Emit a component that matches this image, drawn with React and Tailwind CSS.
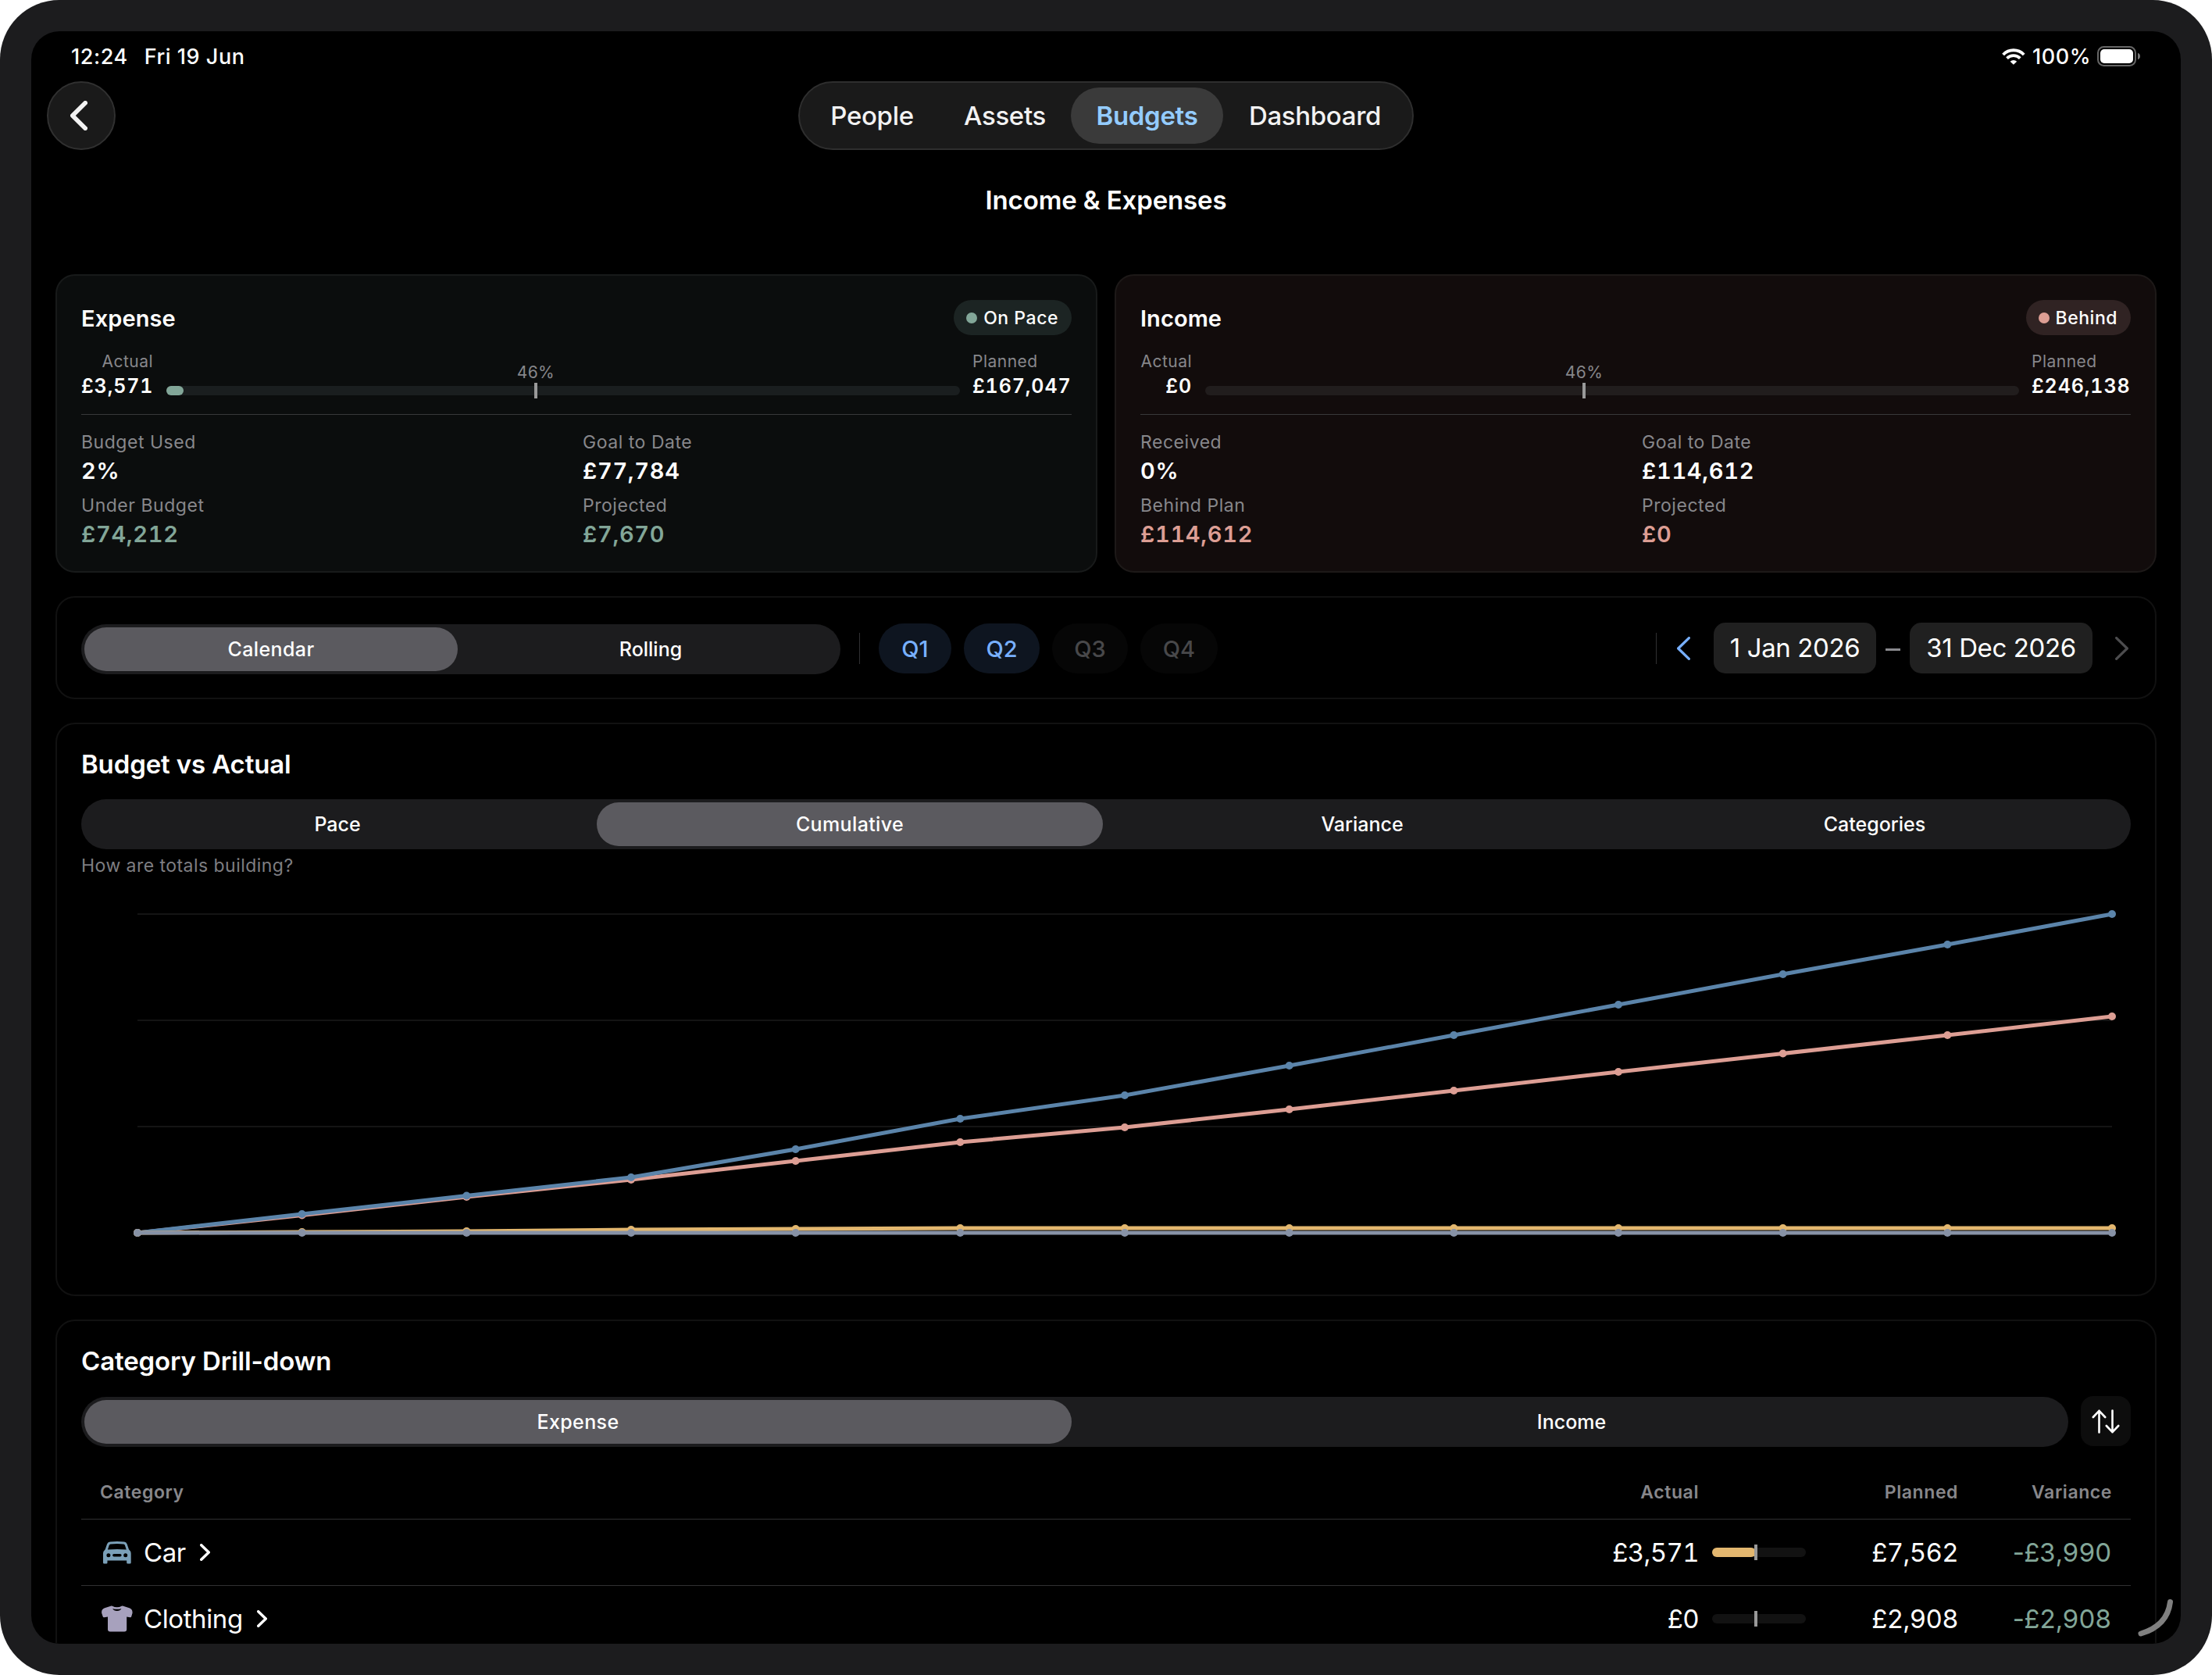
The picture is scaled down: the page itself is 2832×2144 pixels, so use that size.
import clsx from 'clsx'

const TABS = ['People', 'Assets', 'Budgets', 'Dashboard']

const SUMMARIES = [
  {
    title: 'Expense',
    status: 'On Pace',
    actual: '£3,571',
    planned: '£167,047',
    progress: 2.2,
    stats: [
      { label: 'Budget Used', value: '2%' },
      { label: 'Goal to Date', value: '£77,784' },
      { label: 'Under Budget', value: '£74,212', accent: true },
      { label: 'Projected', value: '£7,670', accent: true },
    ],
    actualWidth: 'w-[92px]',
    card: 'bg-[#0b0d0d] outline-[#181a1a]',
    badge: 'bg-[#1c2423]',
    dot: 'bg-[#82a698]',
    track: 'bg-[#1a1e1f]',
    accent: 'text-[#82a698]',
  },
  {
    title: 'Income',
    status: 'Behind',
    actual: '£0',
    planned: '£246,138',
    progress: 0,
    stats: [
      { label: 'Received', value: '0%' },
      { label: 'Goal to Date', value: '£114,612' },
      { label: 'Behind Plan', value: '£114,612', accent: true },
      { label: 'Projected', value: '£0', accent: true },
    ],
    actualWidth: 'w-[66px]',
    card: 'bg-[#120c0c] outline-[#1d1918]',
    badge: 'bg-[#302323]',
    dot: 'bg-[#dd9e94]',
    track: 'bg-[#211d1d]',
    accent: 'text-[#dd9e94]',
  },
]

const QUARTERS = [
  { label: 'Q1', active: true, width: 'w-[93px]' },
  { label: 'Q2', active: true, width: 'w-[97px]' },
  { label: 'Q3', active: false, width: 'w-[97px]' },
  { label: 'Q4', active: false, width: 'w-[99px]' },
]

// Monthly running totals, already in chart pixels (0 = top of the plot).
const SERIES = [
  { color: '#dd9e94', ys: [438, 415.5, 392, 370, 346, 322, 303, 280, 256, 232, 208.5, 185, 161] },
  { color: '#5b84aa', ys: [438, 414, 390.5, 367, 331, 292, 262, 224, 185, 146, 107, 69, 30] },
  { color: '#e3b76f', ys: [438, 437, 436, 434, 433, 432, 432, 432, 432, 432, 432, 432, 432] },
  { color: '#8792a6', ys: [438, 438, 438, 438, 438, 438, 438, 438, 438, 438, 438, 438, 438] },
]

const CATEGORIES = [
  { name: 'Car', icon: CarIcon, actual: '£3,571', planned: '£7,562', variance: '£3,990', progress: 47 },
  { name: 'Clothing', icon: ShirtIcon, actual: '£0', planned: '£2,908', variance: '£2,908', progress: 0 },
]

function WifiIcon() {
  return (
    <svg width="30" height="21" viewBox="0 0 30 21" fill="none" stroke="#fff">
      <path d="M1.6 8A18.4 18.4 0 0 1 28.2 8" strokeWidth="3.9" />
      <path d="M6.5 12.6A11.8 11.8 0 0 1 23.3 12.6" strokeWidth="3.7" />
      <path d="M10.6 16.7A6 6 0 0 1 19.2 16.7L14.9 20.8Z" fill="#fff" stroke="none" />
    </svg>
  )
}

function BatteryIcon() {
  return (
    <svg width="56" height="26" viewBox="0 0 56 26">
      <rect x="1" y="1" width="48" height="24" rx="7.5" fill="none" stroke="#666" strokeWidth="2" />
      <rect x="4" y="4" width="42" height="18" rx="5" fill="#fff" />
      <path d="M52 8.8C54 9.4 55 11 55 13S54 16.6 52 17.2Z" fill="#777" />
    </svg>
  )
}

function Chevron({ dir = 'right', width, height, stroke, className }) {
  const half = stroke / 2
  const d =
    dir === 'left'
      ? `M${width - half} ${half}L${half} ${height / 2}L${width - half} ${height - half}`
      : `M${half} ${half}L${width - half} ${height / 2}L${half} ${height - half}`
  return (
    <svg
      width={width}
      height={height}
      fill="none"
      stroke="currentColor"
      strokeWidth={stroke}
      strokeLinecap="round"
      strokeLinejoin="round"
      className={className}
    >
      <path d={d} />
    </svg>
  )
}

function CarIcon() {
  return (
    <svg width="36" height="29" viewBox="0 0 36 29" fill="#7ba0b8" fillRule="evenodd">
      <path d="M9 .5Q18-.5 27 .5Q29.6.8 30.6 3.2L33 10.2Q35.7 12.4 35.7 15.6V27.2Q35.7 28.6 34.3 28.6H31.6Q30.2 28.6 30.2 27.2V24.6H5.5V27.2Q5.5 28.6 4.1 28.6H1.4Q0 28.6 0 27.2V15.6Q0 12.4 2.7 10.2L5.1 3.2Q6.1.8 9 .5ZM9.4 3.4Q8.2 3.6 7.8 4.7L5.9 10.5Q18 9.6 29.8 10.5L27.9 4.7Q27.5 3.6 26.3 3.4Q18 2.7 9.4 3.4ZM6.9 15.2A2.5 2.5 0 1 0 6.9 20.2A2.5 2.5 0 1 0 6.9 15.2ZM28.7 15.2A2.5 2.5 0 1 0 28.7 20.2A2.5 2.5 0 1 0 28.7 15.2ZM13.9 16A1.8 1.8 0 0 0 13.9 19.6H21.8A1.8 1.8 0 0 0 21.8 16Z" />
    </svg>
  )
}

function ShirtIcon() {
  return (
    <svg width="40" height="34" viewBox="0 0 40 34" fill="#a7a1bd" fillRule="evenodd">
      <path d="M12.6.4Q13.3.3 13.9.7Q16.5 2.2 19.8 2.2T25.7.7Q26.3.3 27 .4L35.6 3.3Q39 4.6 39.4 7.4L39.6 9.6L38.2 14.2Q37.9 15.4 36.6 15.2L32.2 14.4V30.4Q32.2 33.4 29.2 33.4H11Q8 33.4 8 30.4V14.4L3.4 15.2Q2 15.4 1.7 14.2L.1 9.6L.2 7.4Q.6 4.6 4 3.3ZM14.2 3.9Q15.6 6.9 19.8 6.9T25.4 3.9Q22.8 4.8 19.8 4.8T14.2 3.9Z" />
    </svg>
  )
}

function SortIcon() {
  return (
    <svg width="36" height="31" viewBox="0 0 36 31" fill="none" stroke="#fff" strokeWidth="2.6" strokeLinecap="round" strokeLinejoin="round">
      <path d="M9.5 29.5V1.8M1.8 10L9.5 1.8L17.2 10" />
      <path d="M26.5 1.5V29.2M18.8 21L26.5 29.2L34.2 21" />
    </svg>
  )
}

function StatusBar() {
  return (
    <div className="h-16 pl-[51px] pr-[51px] flex items-center justify-between text-[27px] font-medium tracking-[0.02em]">
      <div className="pt-0.5 flex gap-[21px]">
        <span>12:24</span>
        <span>Fri 19 Jun</span>
      </div>
      <div className="flex items-center">
        <WifiIcon />
        <span className="pt-0.5 ml-[9px] mr-2">100%</span>
        <BatteryIcon />
      </div>
    </div>
  )
}

function NavBar() {
  return (
    <div className="grid grid-cols-[1fr_auto_1fr] h-[88px] px-5">
      <button className="size-[88px] rounded-full bg-[#1a1a1a] border-2 border-[#303030] flex items-center justify-center text-[#f2f2f2]">
        <Chevron dir="left" width={22} height={38} stroke={5.6} className="mr-[6px]" />
      </button>
      <div className="w-[788px] rounded-full bg-[#1a1a1a] border-2 border-[#2e2e2e] px-[7px] flex items-center">
        {TABS.map((tab) => (
          <button
            key={tab}
            className={clsx(
              'h-[72px] pt-0.5 rounded-full text-[33px] text-center tracking-[-0.01em]',
              tab === 'People' && 'w-[171px]',
              tab === 'Assets' && 'w-[169px]',
              tab === 'Dashboard' && 'w-[235px]',
              tab === 'Budgets'
                ? 'w-[195px] bg-[#3a3a3a] text-[#94ccff] font-semibold'
                : 'text-[#f2f2f2] font-medium',
            )}
          >
            {tab}
          </button>
        ))}
      </div>
    </div>
  )
}

function SummaryCard({ data }) {
  return (
    <div className={clsx('h-[380px] rounded-3xl outline-2 -outline-offset-1 p-8', data.card)}>
      <div className="flex justify-between">
        <h2 className="text-[29px] leading-[48px] font-semibold tracking-[0.003em]">{data.title}</h2>
        <div className={clsx('h-[45px] rounded-full pl-4 pr-[17px] flex items-center', data.badge)}>
          <span className={clsx('size-[14px] rounded-full', data.dot)} />
          <span className="pt-px ml-2 text-[23px] font-medium tracking-[0.023em]">{data.status}</span>
        </div>
      </div>

      <div className="mt-[14px] h-16 flex">
        <div className={clsx('shrink-0 mr-[17px] text-right', data.actualWidth)}>
          <p className="text-[21px] leading-[34px] text-[#87878b] tracking-[0.023em]">Actual</p>
          <p className="text-[25px] leading-7 font-semibold tabular-nums whitespace-nowrap tracking-[0.035em]">{data.actual}</p>
        </div>
        <div className={clsx('relative flex-1 h-3 mt-12 rounded-full', data.track)}>
          {data.progress > 0 && (
            <div className={clsx('h-3 rounded-full', data.dot)} style={{ width: `${data.progress}%` }} />
          )}
          <div className="absolute left-[46.55%] -top-1 w-1 h-5 -ml-0.5 bg-[#999]" />
          <span className="absolute left-[46.55%] -top-[33px] -translate-x-1/2 text-[21px] leading-8 text-[#87878b] tracking-[0.02em]">
            46%
          </span>
        </div>
        <div className="shrink-0 w-32 pl-px ml-[15px]">
          <p className="text-[21px] leading-[34px] text-[#87878b] tracking-[0.023em]">Planned</p>
          <p className="text-[25px] leading-7 font-semibold tabular-nums whitespace-nowrap tracking-[0.035em]">{data.planned}</p>
        </div>
      </div>

      <div className="mt-5 h-px bg-[#38393a]" />

      <div className="mt-[17px] grid grid-cols-2 gap-x-4 gap-y-[9px]">
        {data.stats.map((stat) => (
          <div key={stat.label}>
            <p className="text-[23px] leading-[37px] text-[#87878b] tracking-[0.023em]">{stat.label}</p>
            <p
              className={clsx(
                'text-[29px] leading-[35px] font-semibold tabular-nums tracking-[0.024em]',
                stat.accent && data.accent,
              )}
            >
              {stat.value}
            </p>
          </div>
        ))}
      </div>
    </div>
  )
}

function Segmented({ options, selected, className }) {
  return (
    <div className={clsx('h-16 rounded-full bg-[#1c1c1e] flex', className)}>
      {options.map((option) => (
        <div key={option} className="flex-1 p-1">
          <div
            className={clsx(
              'h-14 pt-0.5 rounded-full flex items-center justify-center text-[25px] font-medium',
              option === selected && 'bg-[#5b5a5f] tracking-[0.015em]',
            )}
          >
            {option}
          </div>
        </div>
      ))}
    </div>
  )
}

function FilterBar() {
  return (
    <div className="mt-8 h-[130px] rounded-3xl outline-2 -outline-offset-1 outline-[#111] px-8 pt-[34px] flex">
      <Segmented options={['Calendar', 'Rolling']} selected="Calendar" className="w-[972px] mt-px" />
      <div className="mt-3 ml-6 w-px h-10 bg-[#303032]" />
      <div className="ml-6 flex gap-4">
        {QUARTERS.map((q) => (
          <div
            key={q.label}
            className={clsx(
              'h-16 pt-px rounded-full flex items-center justify-center text-[29px] font-medium',
              q.width,
              q.active ? 'bg-[#0e1520] text-[#78b0ff]' : 'bg-[#060606] text-[#48484a]',
            )}
          >
            {q.label}
          </div>
        ))}
      </div>
      <div className="ml-auto mt-3 w-px h-10 bg-[#303032]" />
      <Chevron dir="left" width={17} height={30} stroke={3.2} className="mt-[17px] ml-[26px] text-[#78b0ff]" />
      <div className="-mt-px ml-[30px] w-[208px] h-[65px] rounded-[15px] bg-[#202020] flex items-center justify-center text-[33px] tracking-[-0.012em]">
        1 Jan 2026
      </div>
      <div className="mt-8 mx-3 w-[19px] h-[3px] bg-[#8a8a8e]" />
      <div className="-mt-px w-[234px] h-[65px] rounded-[15px] bg-[#202020] flex items-center justify-center text-[33px] tracking-[-0.012em]">
        31 Dec 2026
      </div>
      <Chevron width={17} height={30} stroke={3.2} className="mt-[17px] ml-[29px] mr-[3px] text-[#4c4c4e]" />
    </div>
  )
}

function BudgetChart() {
  const x = (i) => 72 + (i * 2528) / 12
  return (
    <svg width="2624" height="480" viewBox="0 0 2624 480" className="mt-[17px]">
      {[30, 166, 302, 438].map((y) => (
        <line key={y} x1="72" x2="2600" y1={y} y2={y} stroke="#141414" strokeWidth="2" />
      ))}
      {SERIES.map((s) => (
        <g key={s.color}>
          <polyline
            points={s.ys.map((y, i) => `${x(i)},${y}`).join(' ')}
            fill="none"
            stroke={s.color}
            strokeWidth="5"
            strokeLinejoin="round"
          />
          {s.ys.map((y, i) => (
            <circle key={i} cx={x(i)} cy={y} r="5" fill={s.color} />
          ))}
        </g>
      ))}
    </svg>
  )
}

function CategoryRow({ row }) {
  const Icon = row.icon
  return (
    <div className="h-[85px] border-t border-[#303032] pl-[26px] pr-6 flex items-center text-[33px]">
      <div className="w-10 flex justify-center">
        <Icon />
      </div>
      <span className="pt-px ml-[14px] tracking-[-0.012em]">{row.name}</span>
      <Chevron width={13} height={22} stroke={3.4} className="ml-[18px]" />
      <span className="pt-px ml-auto tabular-nums tracking-[-0.02em]">{row.actual}</span>
      <div className="relative ml-[17px] w-[120px] h-3 rounded-full bg-[#121212]">
        {row.progress > 0 && (
          <div className="h-3 rounded-full bg-[#e3b76f]" style={{ width: `${row.progress}%` }} />
        )}
        <div className="absolute left-[54px] -top-1 w-1 h-5 bg-[#999]" />
      </div>
      <span className="pt-px w-[195px] text-right tabular-nums tracking-[-0.02em]">{row.planned}</span>
      <span className="pt-px w-[196px] mr-px text-right tracking-[-0.015em] text-[#82a698]">
        -<span className="tabular-nums">{row.variance}</span>
      </span>
    </div>
  )
}

export default function App() {
  return (
    <div className="w-[2832px] h-[2144px] bg-white font-['Inter',sans-serif] text-white">
      <div className="h-full rounded-[76px] bg-[#1c1c1e] p-10">
        <div className="relative h-full rounded-[36px] bg-black overflow-hidden">
          <StatusBar />
          <NavBar />
          <h1 className="h-32 pt-0.5 flex items-center justify-center text-[33px] font-semibold tracking-[-0.004em]">
            Income &amp; Expenses
          </h1>

          <main className="px-8 pt-8">
            <div className="grid grid-cols-2 gap-6">
              {SUMMARIES.map((data) => (
                <SummaryCard key={data.title} data={data} />
              ))}
            </div>

            <FilterBar />

            <section className="mt-8 h-[732px] rounded-3xl outline-2 -outline-offset-1 outline-[#111] p-8">
              <h2 className="text-[33px] leading-10 font-semibold tracking-[-0.004em]">Budget vs Actual</h2>
              <Segmented
                options={['Pace', 'Cumulative', 'Variance', 'Categories']}
                selected="Cumulative"
                className="mt-[25px]"
              />
              <p className="mt-[6px] text-[23px] leading-[30px] text-[#7e7e82] tracking-[0.02em]">How are totals building?</p>
              <BudgetChart />
            </section>

            <section className="mt-8 h-[500px] rounded-3xl outline-2 -outline-offset-1 outline-[#111] p-8">
              <h2 className="text-[33px] leading-10 font-semibold tracking-[-0.004em]">Category Drill-down</h2>
              <div className="mt-[25px] flex">
                <Segmented options={['Expense', 'Income']} selected="Expense" className="mt-px flex-1" />
                <button className="ml-4 size-16 rounded-2xl bg-[#0d0d0d] flex items-center justify-center">
                  <SortIcon />
                </button>
              </div>
              <div className="mt-6 h-[68px] pl-6 pr-6 flex items-center text-[23px] font-semibold text-[#87878b] tracking-[0.025em]">
                <span>Category</span>
                <span className="ml-auto">Actual</span>
                <span className="ml-[137px] w-[195px] text-right">Planned</span>
                <span className="w-[197px] text-right">Variance</span>
              </div>
              {CATEGORIES.map((row) => (
                <CategoryRow key={row.name} row={row} />
              ))}
            </section>
          </main>

          <svg className="absolute right-1 bottom-[6px]" width="52" height="52" viewBox="0 0 52 52" fill="none">
            <path d="M5 45C27 38.5 40 25 42.5 4.5" stroke="#808080" strokeWidth="7" strokeLinecap="round" />
          </svg>
        </div>
      </div>
    </div>
  )
}
